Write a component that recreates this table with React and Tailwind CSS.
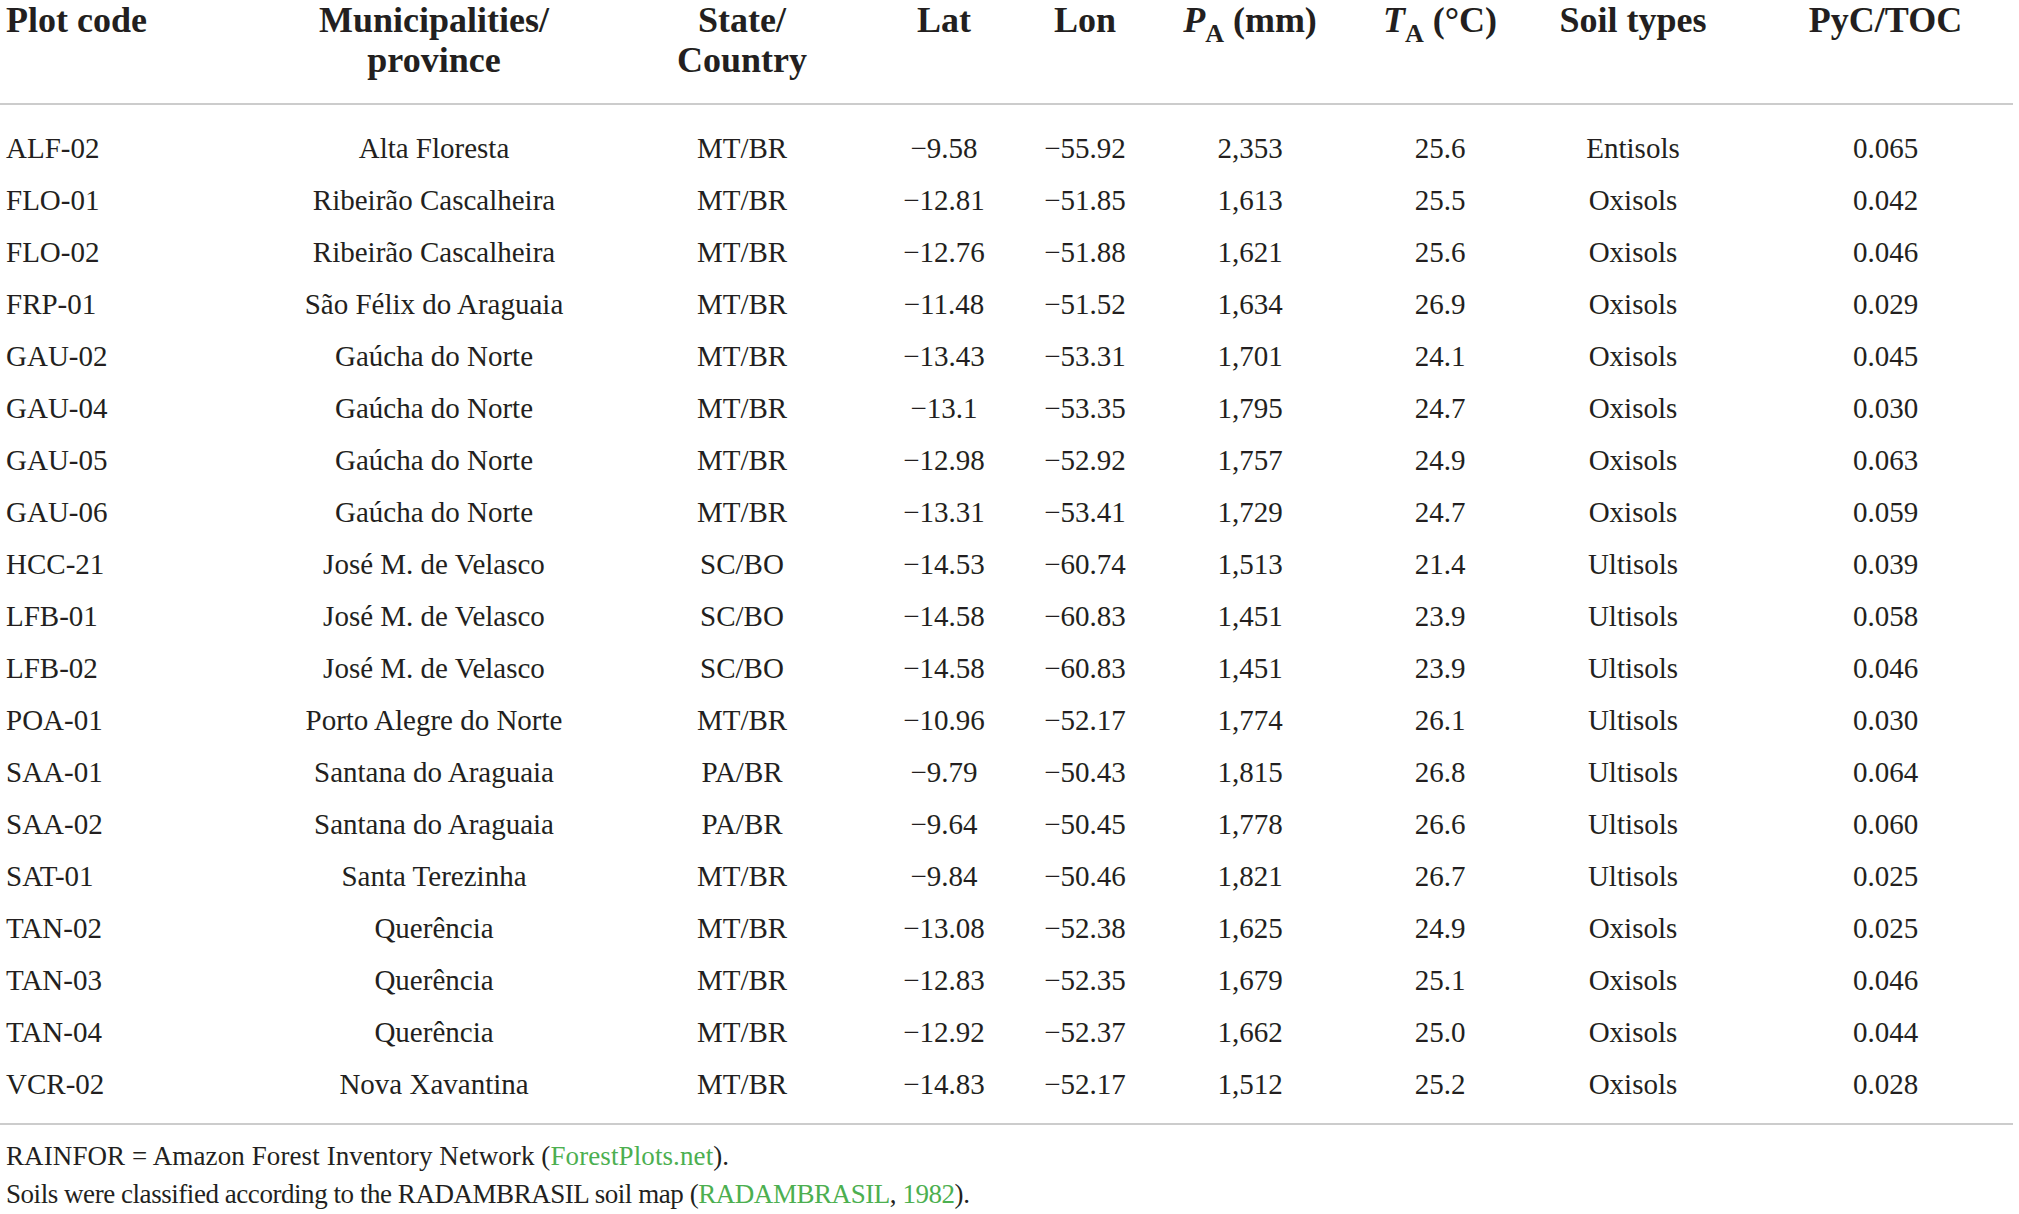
const rows = [
  ["ALF-02", "Alta Floresta", "MT/BR", "−9.58", "−55.92", "2,353", "25.6", "Entisols", "0.065"],
  ["FLO-01", "Ribeirão Cascalheira", "MT/BR", "−12.81", "−51.85", "1,613", "25.5", "Oxisols", "0.042"],
  ["FLO-02", "Ribeirão Cascalheira", "MT/BR", "−12.76", "−51.88", "1,621", "25.6", "Oxisols", "0.046"],
  ["FRP-01", "São Félix do Araguaia", "MT/BR", "−11.48", "−51.52", "1,634", "26.9", "Oxisols", "0.029"],
  ["GAU-02", "Gaúcha do Norte", "MT/BR", "−13.43", "−53.31", "1,701", "24.1", "Oxisols", "0.045"],
  ["GAU-04", "Gaúcha do Norte", "MT/BR", "−13.1", "−53.35", "1,795", "24.7", "Oxisols", "0.030"],
  ["GAU-05", "Gaúcha do Norte", "MT/BR", "−12.98", "−52.92", "1,757", "24.9", "Oxisols", "0.063"],
  ["GAU-06", "Gaúcha do Norte", "MT/BR", "−13.31", "−53.41", "1,729", "24.7", "Oxisols", "0.059"],
  ["HCC-21", "José M. de Velasco", "SC/BO", "−14.53", "−60.74", "1,513", "21.4", "Ultisols", "0.039"],
  ["LFB-01", "José M. de Velasco", "SC/BO", "−14.58", "−60.83", "1,451", "23.9", "Ultisols", "0.058"],
  ["LFB-02", "José M. de Velasco", "SC/BO", "−14.58", "−60.83", "1,451", "23.9", "Ultisols", "0.046"],
  ["POA-01", "Porto Alegre do Norte", "MT/BR", "−10.96", "−52.17", "1,774", "26.1", "Ultisols", "0.030"],
  ["SAA-01", "Santana do Araguaia", "PA/BR", "−9.79", "−50.43", "1,815", "26.8", "Ultisols", "0.064"],
  ["SAA-02", "Santana do Araguaia", "PA/BR", "−9.64", "−50.45", "1,778", "26.6", "Ultisols", "0.060"],
  ["SAT-01", "Santa Terezinha", "MT/BR", "−9.84", "−50.46", "1,821", "26.7", "Ultisols", "0.025"],
  ["TAN-02", "Querência", "MT/BR", "−13.08", "−52.38", "1,625", "24.9", "Oxisols", "0.025"],
  ["TAN-03", "Querência", "MT/BR", "−12.83", "−52.35", "1,679", "25.1", "Oxisols", "0.046"],
  ["TAN-04", "Querência", "MT/BR", "−12.92", "−52.37", "1,662", "25.0", "Oxisols", "0.044"],
  ["VCR-02", "Nova Xavantina", "MT/BR", "−14.83", "−52.17", "1,512", "25.2", "Oxisols", "0.028"],
];

const grid =
  "grid grid-cols-[280px_308px_308px_96px_186px_144px_236px_150px_305px]";

export default function App() {
  return (
    <div
      className="w-[2013px] bg-white text-[#231f20]"
      style={{ fontFamily: '"Liberation Serif", "Times New Roman", serif' }}
    >
      {/* header */}
      <div className={`${grid} pb-[23px] text-[36px] font-bold leading-[40px]`}>
        <div className="pl-[6px]">Plot code</div>
        <div className="text-center">
          Municipalities/
          <br />
          province
        </div>
        <div className="text-center">
          State/
          <br />
          Country
        </div>
        <div className="text-center">Lat</div>
        <div className="text-center">Lon</div>
        <div className="text-center whitespace-nowrap">
          <i>P</i>
          <sub className="text-[26px] align-[-3px]">A</sub> (mm)
        </div>
        <div className="text-center whitespace-nowrap">
          <i>T</i>
          <sub className="text-[26px] align-[-3px]">A</sub> (°C)
        </div>
        <div className="text-center whitespace-nowrap">Soil types</div>
        <div className="text-center pl-[50px]">PyC/TOC</div>
      </div>

      <div className="h-[2px] bg-[#cccccc]" />

      {/* body */}
      <div className="pt-[17px] text-[29px]">
        {rows.map((r) => (
          <div key={r[0]} className={`${grid} h-[52px] items-center leading-none`}>
            <div className="pl-[6px]">{r[0]}</div>
            <div className="text-center whitespace-nowrap">{r[1]}</div>
            <div className="text-center">{r[2]}</div>
            <div className="text-center">{r[3]}</div>
            <div className="text-center">{r[4]}</div>
            <div className="text-center">{r[5]}</div>
            <div className="text-center">{r[6]}</div>
            <div className="text-center">{r[7]}</div>
            <div className="text-center pl-[50px]">{r[8]}</div>
          </div>
        ))}
      </div>

      <div className="mt-[13px] h-[2px] bg-[#cccccc]" />

      {/* footnotes */}
      <div className="pt-[12px] pl-[6px] text-[27px] leading-[38px]">
        <p className="tracking-[0.1px]">
          RAINFOR = Amazon Forest Inventory Network (
          <span className="text-[#4caf50]">ForestPlots.net</span>).
        </p>
        <p className="tracking-[-0.45px]">
          Soils were classified according to the RADAMBRASIL soil map (
          <span className="text-[#4caf50]">RADAMBRASIL</span>,{" "}
          <span className="text-[#4caf50]">1982</span>).
        </p>
      </div>
    </div>
  );
}
